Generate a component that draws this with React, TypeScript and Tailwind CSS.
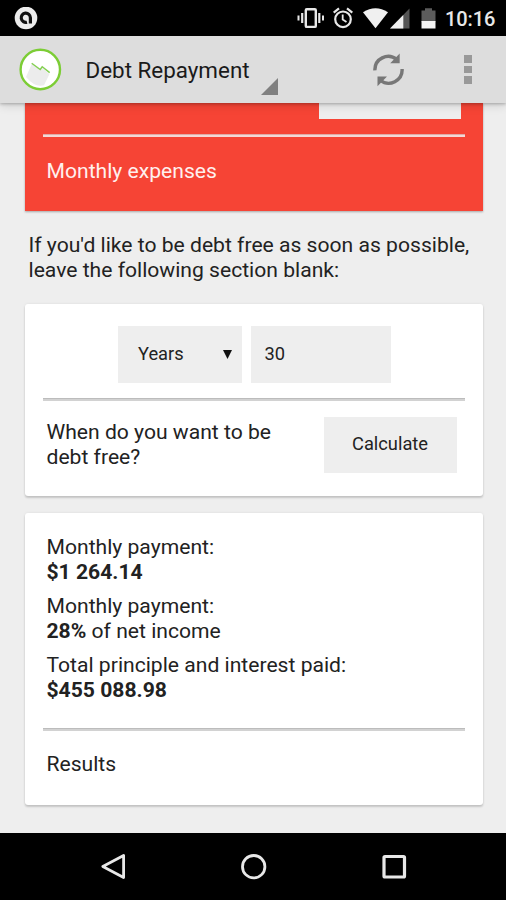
import type { ReactNode } from "react";

function StatusBar() {
  return (
    <div className="flex h-9 shrink-0 items-start bg-black text-[#e8e8e8]">
      <svg className="ml-[14px] mt-[7px] h-[23px] w-[24px]" viewBox="0 0 24 23">
        <circle cx="12" cy="11" r="11.3" fill="#ececec" />
        <path d="M16.4 16.6V10.7a4.6 4.6 0 1 0-3.4 4.5" fill="none" stroke="#111" strokeWidth="3.2" />
      </svg>
      <svg className="ml-[259px] mt-[7px] h-[22px] w-[27px]" viewBox="0 0 27 22" fill="none" stroke="#e8e8e8">
        <rect x="8.8" y="2.3" width="10" height="17.6" rx="1" strokeWidth="2.4" />
        <path d="M5.2 6v10M22.3 6v10" strokeWidth="2.2" />
        <path d="M1.5 8.5v5M26 8.5v5" strokeWidth="2" />
      </svg>
      <svg className="ml-[9px] mt-[7px] h-[22px] w-[20px]" viewBox="0 0 20 22" fill="none" stroke="#e8e8e8">
        <circle cx="10" cy="12.3" r="7.8" strokeWidth="2.2" />
        <path d="M.7 5.6 6 1.4M19.3 5.6 14 1.4" strokeWidth="2.2" />
        <path d="M9.7 7.5v5l3.8 2.5" strokeWidth="1.8" />
      </svg>
      <svg className="ml-[10px] mt-[8px] h-[21px] w-[25px]" viewBox="0 0 25 21">
        <path d="M0 4.2Q12.5-3.6 25 4.2L12.5 20.3Z" fill="#f0f0f0" />
      </svg>
      <svg className="ml-[2px] mt-[8px] h-[21px] w-[20px]" viewBox="0 0 20 21">
        <path d="M19.5.5V20.5H0Z" fill="#555" />
        <path d="M13.3 6.9V20.5H0Z" fill="#f0f0f0" />
      </svg>
      <svg className="ml-[11px] mt-[8px] h-[21px] w-[15px]" viewBox="0 0 15 21">
        <path d="M.5 2.4H4V.2h7v2.2h3.5V14H.5Z" fill="#5c5c5c" />
        <path d="M.5 13h14v7.5H.5Z" fill="#f4f4f4" />
      </svg>
      <span className="ml-[9px] mt-[7px] whitespace-nowrap text-[20px] font-medium leading-6 tracking-[-0.1px]">10:16</span>
    </div>
  );
}

function AppBar() {
  return (
    <header className="relative z-10 flex h-[67px] shrink-0 items-start bg-[#dddddd] shadow-[0_1px_3px_rgba(0,0,0,0.25),0_3px_9px_rgba(0,0,0,0.12)]">
      <svg className="ml-[19px] mt-[12px] h-[43px] w-[43px]" viewBox="0 0 43 43">
        <circle cx="21.3" cy="21.5" r="19.7" fill="#fff" stroke="#7ccd35" strokeWidth="2.4" />
        <path d="M13 15.5 21.5 22 23 20l7.5 6-5.5 11.3q-9 2.5-18-8.3Z" fill="#ececec" />
        <path d="m12.7 15.3 8.5 6.2 2-2.7 7.5 5.8" fill="none" stroke="#83cf50" strokeWidth="1.4" />
      </svg>
      <h1 className="ml-[23.5px] mt-[19px] w-[175.5px] whitespace-nowrap text-[22.4px] leading-[30px] text-[#1a1a1a]">Debt Repayment</h1>
      <svg className="mt-[42px] h-[17px] w-[17px]" viewBox="0 0 17 17">
        <path d="M17 0v17H0Z" fill="#808080" />
      </svg>
      <svg className="ml-[95px] mt-[17px] h-[34px] w-[31px]" viewBox="0 0 31 34" fill="none">
        <path d="M1.9 17.4A13.4 13.4 0 0 1 23.7 6.4" stroke="#777" strokeWidth="3.4" />
        <path d="M26.7.5v9.8H17.2Z" fill="#777" />
        <path d="M29.1 16A13.4 13.4 0 0 1 7.3 27.2" stroke="#777" strokeWidth="3.4" />
        <path d="M4.5 33.2v-9.8H14Z" fill="#777" />
      </svg>
      <div className="ml-[60px] mt-[19px] flex flex-col gap-[3px]">
        <i className="size-[7.5px] bg-[#999]" />
        <i className="size-[7.5px] bg-[#999]" />
        <i className="size-[7.5px] bg-[#999]" />
      </div>
    </header>
  );
}

function Rule({ light = false }: { light?: boolean }) {
  return (
    <hr
      className={
        light
          ? "h-[3px] border-0 border-t border-[#e0aaa6] bg-[#f4d8d5]"
          : "h-[3px] border-0 border-t border-[#bcbcbc] bg-[#d2d2d2]"
      }
    />
  );
}

function Card({ className, children }: { className: string; children: ReactNode }) {
  return (
    <section
      className={`mx-auto w-[458px] shrink-0 rounded-[3px] bg-white px-[18px] shadow-[0_2px_2px_rgba(0,0,0,0.16),0_0_3px_rgba(0,0,0,0.08)] ${className}`}
    >
      {children}
    </section>
  );
}

function Result({ label, children }: { label: string; children: ReactNode }) {
  return (
    <div>
      <dt>{label}</dt>
      <dd>{children}</dd>
    </div>
  );
}

export default function App() {
  return (
    <div className="flex h-[900px] w-[506px] flex-col overflow-hidden bg-[#eeeeee] font-['Roboto',sans-serif] text-[21.12px] leading-[25.3px] text-[#222]">
      <StatusBar />
      <AppBar />
      <main className="flex h-[730px] shrink-0 flex-col pl-[1px]">
        <section className="mx-auto h-[108px] w-[458px] shrink-0 bg-[#f64435] px-[18px] shadow-[0_1px_2px_rgba(0,0,0,0.3)]">
          <div className="mb-[15px] ml-[276px] h-[16px] w-[142px] bg-[#eeeeee]" />
          <Rule light />
          <p className="ml-1 mt-[21px] text-[#fff0ee]">Monthly expenses</p>
        </section>
        <p className="ml-[27.5px] mt-[21px] h-[51px] whitespace-nowrap">
          If you'd like to be debt free as soon as possible,
          <br />
          leave the following section blank:
        </p>
        <Card className="mt-[21px] h-[192px] pt-[22px]">
          <div className="ml-[75px] flex gap-[9px] text-[18.3px]">
            <div className="flex h-[57px] w-[124px] items-center justify-between bg-[#eee] pb-[1px] pl-[20.5px] pr-[9.5px]">
              <span>Years</span>
              <svg className="h-[9px] w-[9px]" viewBox="0 0 9 9"><path d="M0 0h9L4.5 9Z" fill="#111" /></svg>
            </div>
            <div className="flex h-[57px] w-[140px] items-center bg-[#eee] pb-[1px] pl-[14px]">30</div>
          </div>
          <div className="mt-[15px]"><Rule /></div>
          <div className="flex justify-between">
            <p className="ml-1 mt-[18px] whitespace-nowrap">
              When do you want to be
              <br />
              debt free?
            </p>
            <button className="mr-2 mt-[16px] h-[56px] w-[133px] bg-[#eee] pb-[3px] text-[18.3px]">Calculate</button>
          </div>
        </Card>
        <Card className="mt-[17px] h-[292px] pt-[21px]">
          <dl className="ml-1 flex flex-col gap-[8.4px] whitespace-nowrap">
            <Result label="Monthly payment:"><b className="font-bold">$1 264.14</b></Result>
            <Result label="Monthly payment:"><b className="font-bold">28%</b> of net income</Result>
            <Result label="Total principle and interest paid:"><b className="font-bold">$455 088.98</b></Result>
          </dl>
          <div className="mt-[25px]"><Rule /></div>
          <p className="ml-1 mt-[20.5px]">Results</p>
        </Card>
      </main>
      <nav className="flex h-[67px] shrink-0 items-start bg-black">
        <svg className="ml-[100px] mt-[19px] h-[29px] w-[26px]" viewBox="0 0 26 29" fill="none" stroke="#e8e8e8" strokeWidth="2.8">
          <path d="M23.6 3.5v22L2.8 14.5Z" strokeLinejoin="round" />
        </svg>
        <svg className="ml-[114px] mt-[20px] h-[28px] w-[28px]" viewBox="0 0 28 28" fill="none" stroke="#e8e8e8" strokeWidth="2.8">
          <circle cx="13.7" cy="13.7" r="11.2" />
        </svg>
        <svg className="ml-[114px] mt-[21px] h-[26px] w-[26px]" viewBox="0 0 26 26" fill="none" stroke="#e8e8e8" strokeWidth="3.2">
          <rect x="2" y="2.5" width="20.5" height="20.5" rx="1" />
        </svg>
      </nav>
    </div>
  );
}
